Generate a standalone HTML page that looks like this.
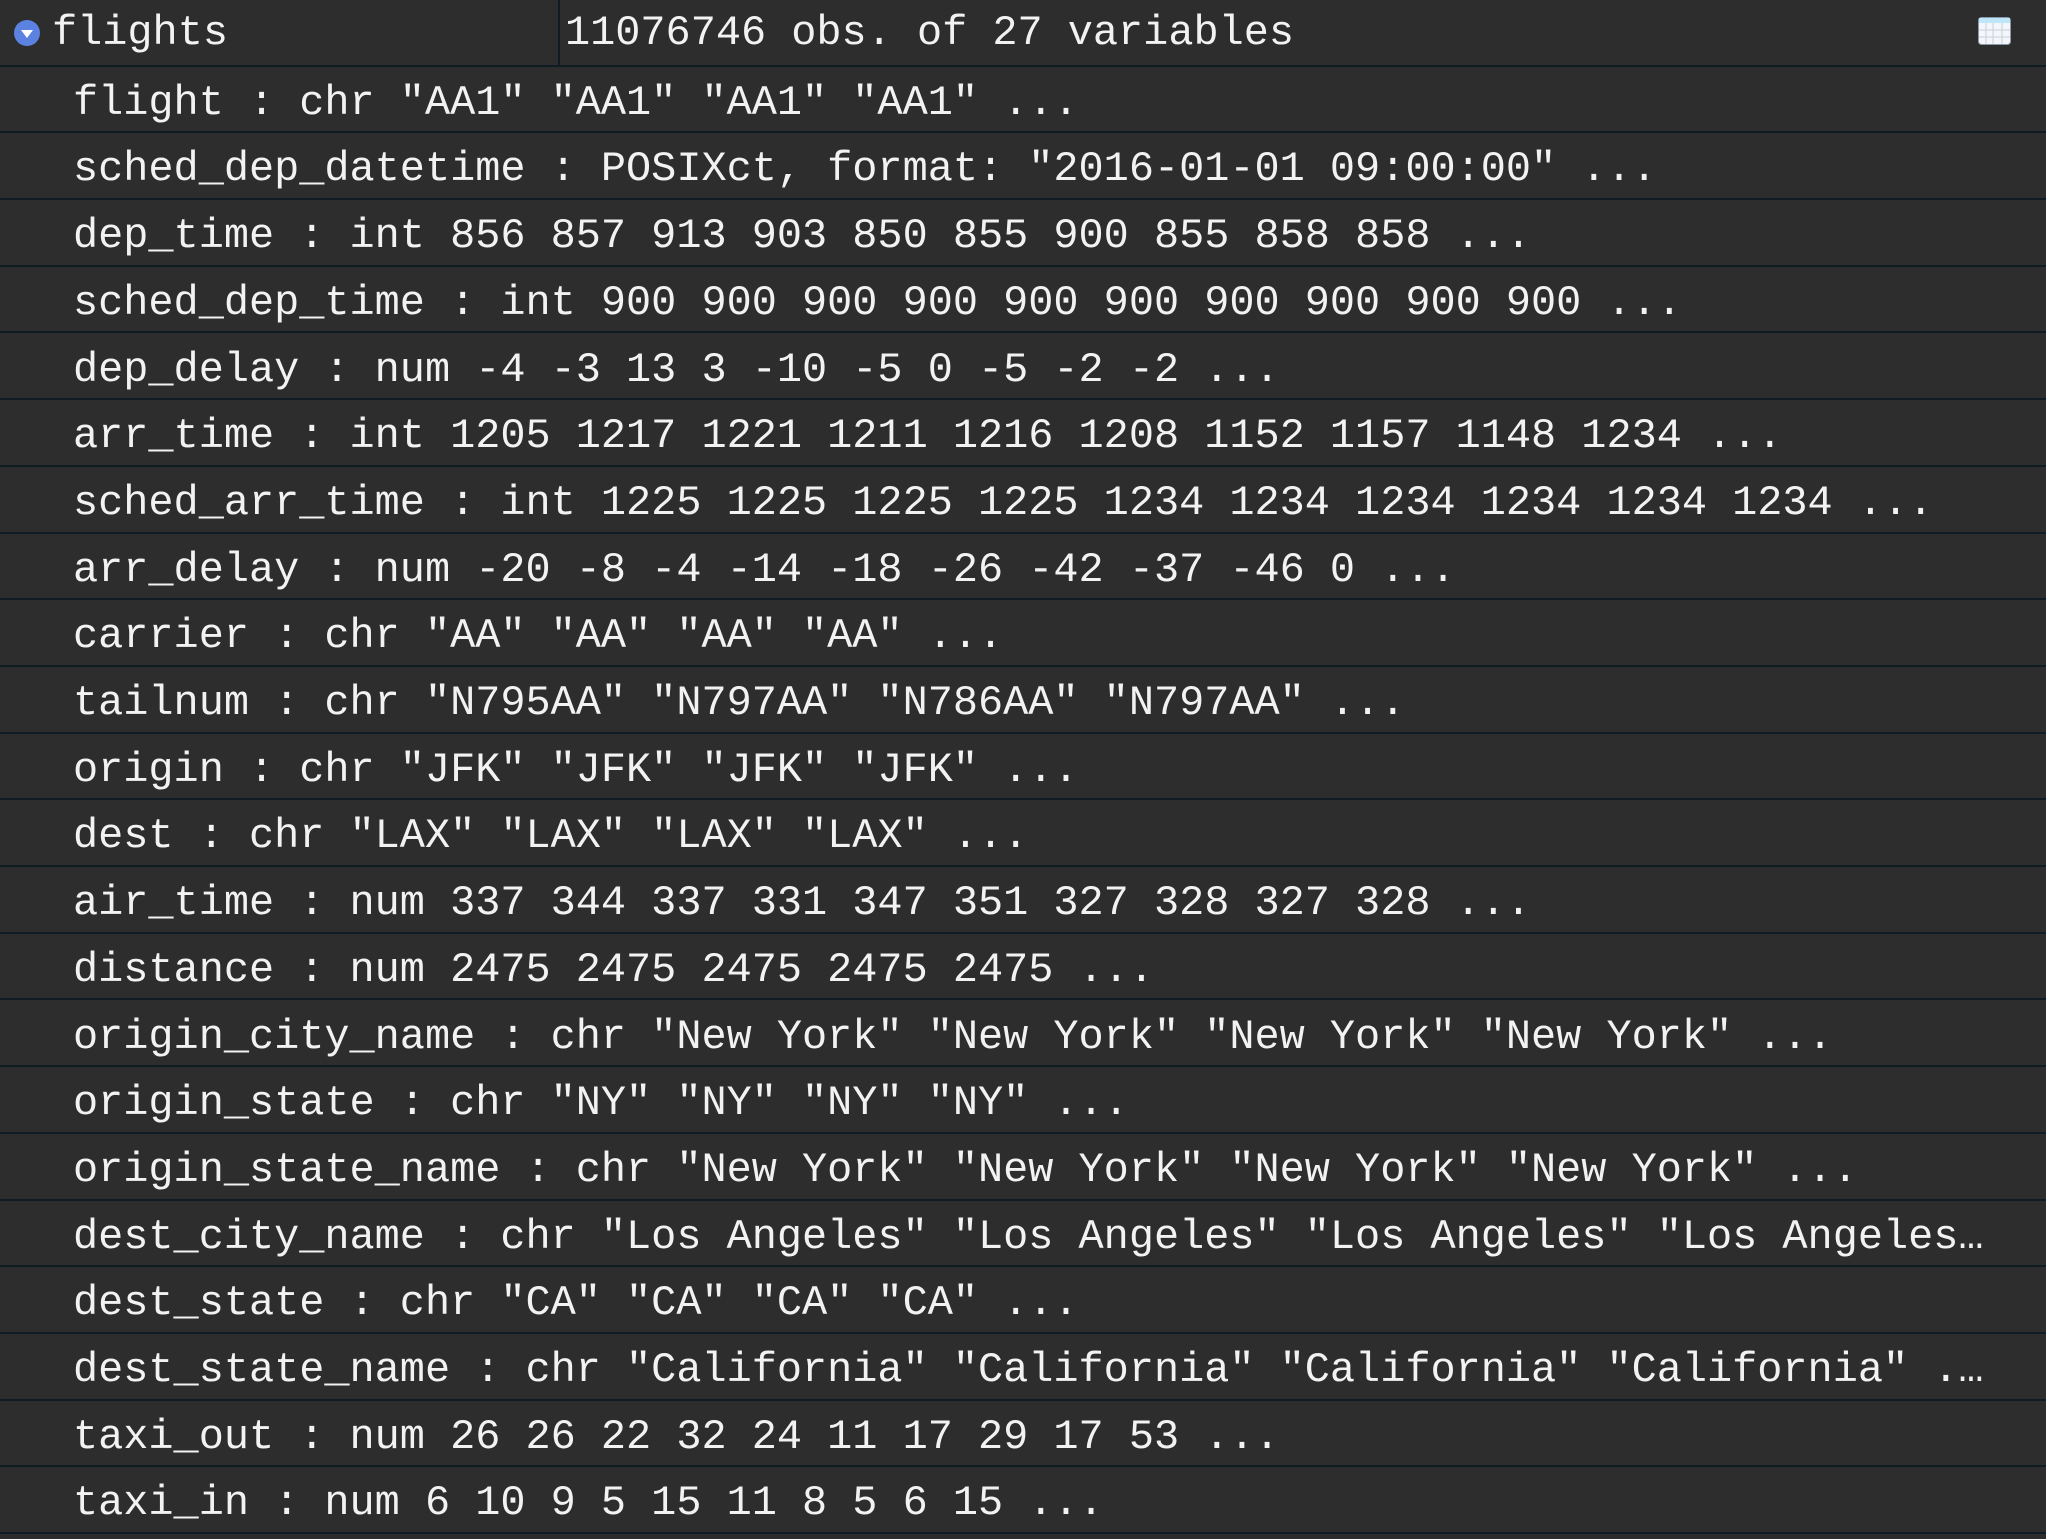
<!DOCTYPE html>
<html><head><style>
body{margin:0;width:2046px;height:1534px;background:#2d2d2d;overflow:hidden;font-family:"Liberation Mono",monospace;color:#f2f2f2;}
.r{position:absolute;left:0;width:2046px;height:64.7px;border-bottom:2px solid #101c24;font-size:41.9px;line-height:72px;white-space:pre;}
.t{position:absolute;left:73px;top:0}
</style></head><body>
<div class="r" style="top:0">
<svg style="position:absolute;left:13px;top:19px" width="28" height="28"><circle cx="14" cy="14" r="13" fill="#5b82e0"/><path d="M8 11 L20 11 L14 19 Z" fill="#fff"/></svg>
<span style="position:absolute;left:52px;top:-3px">flights</span>
<div style="position:absolute;left:558px;top:0;width:2px;height:66px;background:#101c24"></div>
<span style="position:absolute;left:565px;top:-3px">11076746 obs. of 27 variables</span>
<svg style="position:absolute;left:1978px;top:17px" width="33" height="28"><rect x="0.5" y="0.5" width="32" height="27" rx="3" fill="#f4f6fb" stroke="#8a9aa8"/><rect x="1" y="1" width="31" height="5" fill="#bfe6f8"/><path d="M8 6V27M15 6V27M24 6V27M1 13H32M1 20H32" stroke="#c8d0da" stroke-width="1"/></svg>
</div>
<div class="r" style="top:66.7px"><span class="t">flight : chr "AA1" "AA1" "AA1" "AA1" ...</span></div>
<div class="r" style="top:133.4px"><span class="t">sched_dep_datetime : POSIXct, format: "2016-01-01 09:00:00" ...</span></div>
<div class="r" style="top:200.1px"><span class="t">dep_time : int 856 857 913 903 850 855 900 855 858 858 ...</span></div>
<div class="r" style="top:266.8px"><span class="t">sched_dep_time : int 900 900 900 900 900 900 900 900 900 900 ...</span></div>
<div class="r" style="top:333.5px"><span class="t">dep_delay : num -4 -3 13 3 -10 -5 0 -5 -2 -2 ...</span></div>
<div class="r" style="top:400.2px"><span class="t">arr_time : int 1205 1217 1221 1211 1216 1208 1152 1157 1148 1234 ...</span></div>
<div class="r" style="top:466.9px"><span class="t">sched_arr_time : int 1225 1225 1225 1225 1234 1234 1234 1234 1234 1234 ...</span></div>
<div class="r" style="top:533.6px"><span class="t">arr_delay : num -20 -8 -4 -14 -18 -26 -42 -37 -46 0 ...</span></div>
<div class="r" style="top:600.3px"><span class="t">carrier : chr "AA" "AA" "AA" "AA" ...</span></div>
<div class="r" style="top:667px"><span class="t">tailnum : chr "N795AA" "N797AA" "N786AA" "N797AA" ...</span></div>
<div class="r" style="top:733.7px"><span class="t">origin : chr "JFK" "JFK" "JFK" "JFK" ...</span></div>
<div class="r" style="top:800.4px"><span class="t">dest : chr "LAX" "LAX" "LAX" "LAX" ...</span></div>
<div class="r" style="top:867.1px"><span class="t">air_time : num 337 344 337 331 347 351 327 328 327 328 ...</span></div>
<div class="r" style="top:933.8px"><span class="t">distance : num 2475 2475 2475 2475 2475 ...</span></div>
<div class="r" style="top:1000.5px"><span class="t">origin_city_name : chr "New York" "New York" "New York" "New York" ...</span></div>
<div class="r" style="top:1067.2px"><span class="t">origin_state : chr "NY" "NY" "NY" "NY" ...</span></div>
<div class="r" style="top:1133.9px"><span class="t">origin_state_name : chr "New York" "New York" "New York" "New York" ...</span></div>
<div class="r" style="top:1200.6px"><span class="t">dest_city_name : chr "Los Angeles" "Los Angeles" "Los Angeles" "Los Angeles…</span></div>
<div class="r" style="top:1267.3px"><span class="t">dest_state : chr "CA" "CA" "CA" "CA" ...</span></div>
<div class="r" style="top:1334px"><span class="t">dest_state_name : chr "California" "California" "California" "California" .…</span></div>
<div class="r" style="top:1400.7px"><span class="t">taxi_out : num 26 26 22 32 24 11 17 29 17 53 ...</span></div>
<div class="r" style="top:1467.4px"><span class="t">taxi_in : num 6 10 9 5 15 11 8 5 6 15 ...</span></div>
</body></html>
